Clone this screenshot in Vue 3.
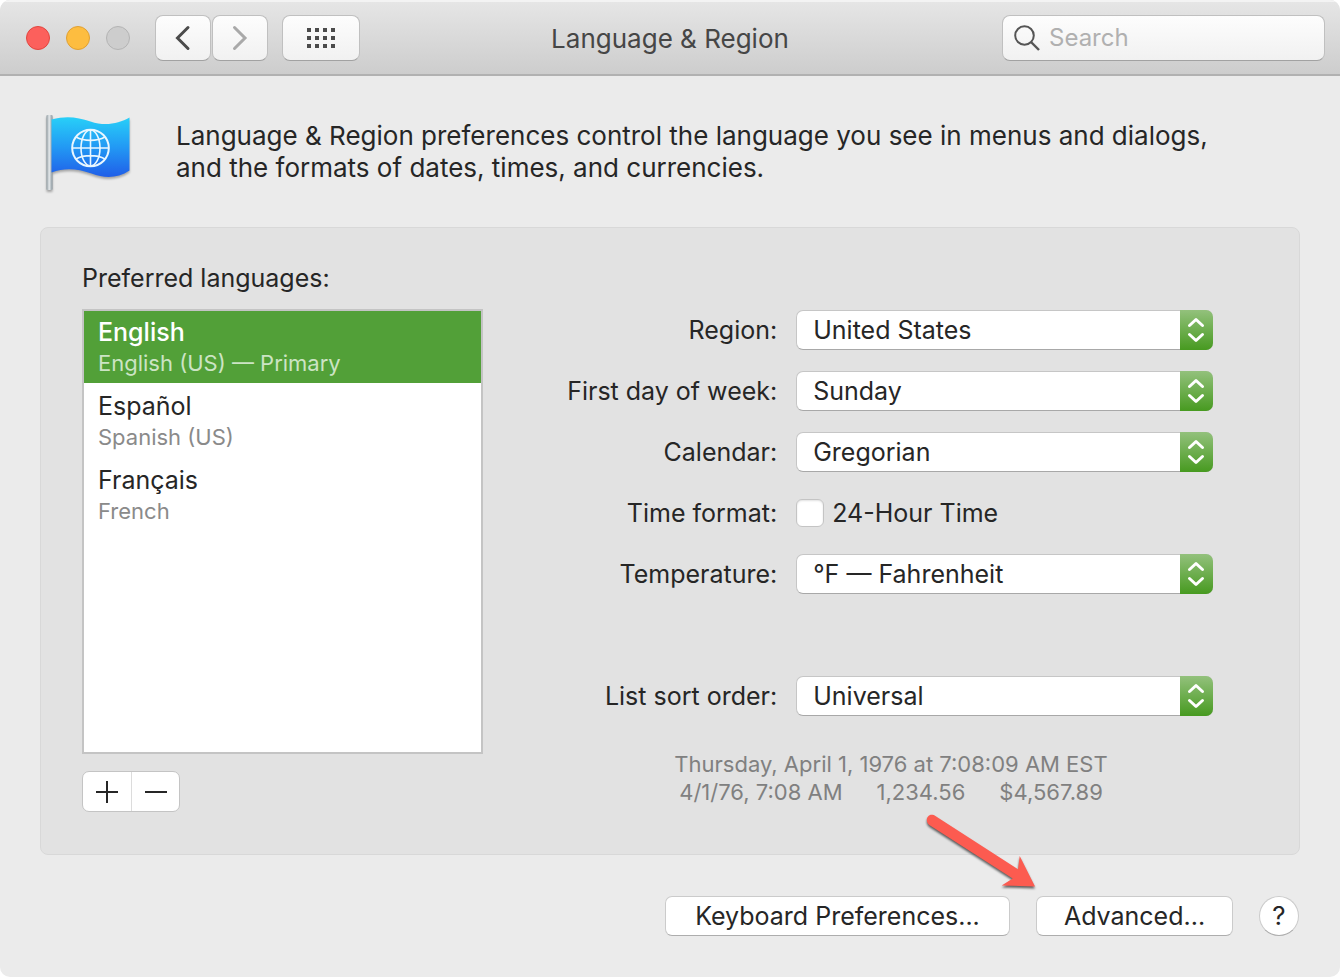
<script setup>
import { ref } from 'vue';

const languages = [
  { name: 'English', detail: 'English (US) — Primary' },
  { name: 'Español', detail: 'Spanish (US)' },
  { name: 'Français', detail: 'French' }
];
const selected = ref(0);
const search = ref('');

const region = ref('United States');
const firstDay = ref('Sunday');
const calendar = ref('Gregorian');
const use24Hour = ref(false);
const temperature = ref('°F — Fahrenheit');
const sortOrder = ref('Universal');
</script>

<template>
  <div class="window">
    <header class="titlebar">
      <div class="toolbar">
        <div class="lights">
          <button type="button" class="light close" aria-label="Close"></button>
          <button type="button" class="light minimize" aria-label="Minimize"></button>
          <button type="button" class="light zoom" aria-label="Zoom" disabled></button>
        </div>
        <div class="nav">
          <button type="button" class="tool" aria-label="Back">
            <svg width="16" height="26" viewBox="0 0 16 26"><path d="M13 2.500 2.500 13 13 23.500" fill="none" stroke="#4b4b4b" stroke-width="3" stroke-linecap="round" /></svg>
          </button>
          <button type="button" class="tool" aria-label="Forward">
            <svg width="16" height="26" viewBox="0 0 16 26"><path d="M2.500 2.500 13 13 2.500 23.500" fill="none" stroke="#a9a9a9" stroke-width="3" stroke-linecap="round" /></svg>
          </button>
        </div>
        <button type="button" class="tool all" aria-label="Show All">
          <svg width="28" height="20" viewBox="0 0 28 20" fill="#4b4b4b">
            <template v-for="row in 3" :key="row">
              <rect v-for="col in 4" :key="col" :x="(col - 1) * 8" :y="(row - 1) * 8" width="4" height="4" />
            </template>
          </svg>
        </button>
      </div>
      <h1>Language &amp; Region</h1>
      <label class="search">
        <svg width="26" height="26" viewBox="0 0 26 26" fill="none" stroke="#555" stroke-width="2"><circle cx="10.500" cy="10.500" r="9.300" /><path d="m17 17 8 8" stroke-width="2.400" /></svg>
        <input v-model="search" type="text" placeholder="Search" aria-label="Search" />
      </label>
    </header>

    <section class="intro">
      <svg class="flag" width="90" height="82" viewBox="0 0 90 82" aria-hidden="true">
        <defs>
          <linearGradient id="cloth" x1="0" y1="0" x2="0" y2="1">
            <stop offset="0" stop-color="#28cff8" />
            <stop offset="0.500" stop-color="#2299f4" />
            <stop offset="1" stop-color="#205ee8" />
          </linearGradient>
          <linearGradient id="pole" x1="0" y1="0" x2="1" y2="0">
            <stop offset="0" stop-color="#8d999f" />
            <stop offset="0.450" stop-color="#e6eaec" />
            <stop offset="1" stop-color="#87949c" />
          </linearGradient>
        </defs>
        <rect x="1.500" y="4" width="6" height="75" rx="1" fill="url(#pole)" />
        <path d="M6.500 8.500c16-4 26-2 39 2 15 5 28 2 39-4v53c-12 8-25 8-38 3-15-5-26-6-40-1z" fill="url(#cloth)" />
        <g fill="none" stroke="#e9f7ff" stroke-width="1.600">
          <circle cx="45.500" cy="37" r="18.300" stroke-width="2" />
          <ellipse cx="45.500" cy="37" rx="9.500" ry="18" />
          <path d="M45.500 19v36M27.500 37h36M31 26c8 4.500 21 4.500 29 0M31 48c8-4.500 21-4.500 29 0" />
        </g>
      </svg>
      <p>Language &amp; Region preferences control the language you see in menus and dialogs,<br />and the formats of dates, times, and currencies.</p>
    </section>

    <main class="panel">
      <section class="languages">
        <h2>Preferred languages:</h2>
        <ul class="list">
          <li v-for="(lang, i) in languages" :key="lang.name">
            <button type="button" class="language" :class="{ active: selected === i }" @click="selected = i">
              <span class="name">{{ lang.name }}</span>
              <span class="detail">{{ lang.detail }}</span>
            </button>
          </li>
        </ul>
        <div class="edit">
          <button type="button" aria-label="Add language">
            <svg width="24" height="24" viewBox="0 0 24 24"><path d="M12 1v22M1 12h22" stroke="#262626" stroke-width="2" /></svg>
          </button>
          <button type="button" aria-label="Remove language">
            <svg width="24" height="24" viewBox="0 0 24 24"><path d="M1 12h22" stroke="#262626" stroke-width="2" /></svg>
          </button>
        </div>
      </section>

      <section class="formats">
        <form class="fields" @submit.prevent>
          <label for="region">Region:</label>
          <div class="popup">
            <select id="region" v-model="region"><option>United States</option></select>
            <span class="stepper"><svg width="18" height="26" viewBox="0 0 18 26"><path d="m2.500 8.500 6.500-6 6.500 6M2.500 17.500l6.500 6 6.500-6" /></svg></span>
          </div>

          <label for="first-day">First day of week:</label>
          <div class="popup">
            <select id="first-day" v-model="firstDay"><option>Sunday</option><option>Monday</option></select>
            <span class="stepper"><svg width="18" height="26" viewBox="0 0 18 26"><path d="m2.500 8.500 6.500-6 6.500 6M2.500 17.500l6.500 6 6.500-6" /></svg></span>
          </div>

          <label for="calendar">Calendar:</label>
          <div class="popup">
            <select id="calendar" v-model="calendar"><option>Gregorian</option></select>
            <span class="stepper"><svg width="18" height="26" viewBox="0 0 18 26"><path d="m2.500 8.500 6.500-6 6.500 6M2.500 17.500l6.500 6 6.500-6" /></svg></span>
          </div>

          <span class="caption">Time format:</span>
          <label class="check">
            <input v-model="use24Hour" type="checkbox" />
            24-Hour Time
          </label>

          <label for="temperature">Temperature:</label>
          <div class="popup">
            <select id="temperature" v-model="temperature"><option>°F — Fahrenheit</option><option>°C — Celsius</option></select>
            <span class="stepper"><svg width="18" height="26" viewBox="0 0 18 26"><path d="m2.500 8.500 6.500-6 6.500 6M2.500 17.500l6.500 6 6.500-6" /></svg></span>
          </div>

          <div class="spacer"></div>

          <label for="sort-order">List sort order:</label>
          <div class="popup">
            <select id="sort-order" v-model="sortOrder"><option>Universal</option></select>
            <span class="stepper"><svg width="18" height="26" viewBox="0 0 18 26"><path d="m2.500 8.500 6.500-6 6.500 6M2.500 17.500l6.500 6 6.500-6" /></svg></span>
          </div>
        </form>

        <div class="sample">
          <p>Thursday, April 1, 1976 at 7:08:09 AM EST</p>
          <p class="numbers"><span>4/1/76, 7:08 AM</span><span>1,234.56</span><span>$4,567.89</span></p>
        </div>
      </section>
    </main>

    <footer class="actions">
      <button type="button" class="push keyboard">Keyboard Preferences...</button>
      <div class="advanced">
        <button type="button" class="push">Advanced...</button>
        <svg class="arrow" width="120" height="84" viewBox="0 0 120 84" aria-hidden="true">
          <path d="M11 3.700 94 57.300 95.700 44 111 74.500 77.700 73.500 88.700 66.500 5.300 13C1 10 2.500 2 8.500 2.800c1 .1 1.800.400 2.500.900z" fill="#fc5b50" />
        </svg>
      </div>
      <button type="button" class="help" aria-label="Help">?</button>
    </footer>
  </div>
</template>

<style>
body {
  background: #fff;
}
</style>

<style scoped>
.window {
  display: flex;
  flex-direction: column;
  min-height: 100vh;
  box-sizing: border-box;
  overflow: hidden;
  border-radius: 10px;
  background: #ebebeb;
  color: #262626;
  font-family: Inter, "Liberation Sans", sans-serif;
  font-size: 25px;
  line-height: 32px;
}

h1,
h2,
p,
ul {
  margin: 0;
  padding: 0;
  font-size: inherit;
  font-weight: 400;
}

button,
input,
select {
  margin: 0;
  padding: 0;
  border: 0;
  font: inherit;
  color: inherit;
}

/* Title bar */
.titlebar {
  display: grid;
  grid-template-columns: 1fr auto 1fr;
  align-items: center;
  box-sizing: border-box;
  height: 76px;
  padding: 2px 15px 0 26px;
  border-bottom: 2px solid #b1b1b1;
  background: linear-gradient(#e6e6e6, #cdcdcd);
  box-shadow: inset 0 2px 0 #f3f3f3;
}

.titlebar h1 {
  padding-right: 11px;
  padding-top: 2px;
  color: #464646;
  font-size: 26px;
}

.toolbar {
  display: flex;
  align-items: center;
}

.lights {
  display: flex;
  gap: 16px;
  margin-right: 25px;
}

.light {
  width: 24px;
  height: 24px;
  border: 1px solid #b4b4b4;
  border-radius: 50%;
  background: #cdcdcd;
}

.light.close {
  border-color: #e2463f;
  background: #fc605c;
}

.light.minimize {
  border-color: #e0a033;
  background: #fdbd40;
}

.nav {
  display: flex;
  gap: 1px;
  margin-right: 14px;
}

.tool,
.search {
  display: flex;
  align-items: center;
  box-sizing: border-box;
  height: 46px;
  border: 1px solid #c0c0c0;
  border-bottom-color: #a2a2a2;
  border-radius: 8px;
  background: linear-gradient(#fdfdfd, #f1f1f1);
}

.tool {
  justify-content: center;
  width: 56px;
}

.tool.all {
  width: 78px;
}

.search {
  justify-self: end;
  width: 100%;
  max-width: 323px;
  gap: 9px;
  padding: 0 11px;
}

.search svg {
  flex: none;
}

.search input {
  width: 100%;
  min-width: 0;
  background: transparent;
  font-size: 24px;
  outline: none;
}

.search input::placeholder {
  color: #b0b0b0;
  opacity: 1;
}

/* Heading with the flag */
.intro {
  display: flex;
  align-items: center;
  gap: 41px;
  height: 151px;
  padding: 0 45px;
  font-size: 26px;
}

.flag {
  flex: none;
  filter: drop-shadow(0 2px 1px rgba(0, 0, 0, 0.3));
}

/* Panel */
.panel {
  display: grid;
  grid-template-columns: 401px 1fr;
  margin: 0 40px;
  padding: 34px 0 42px 41px;
  border: 1px solid #d8d8d8;
  border-radius: 8px;
  background: #e2e2e2;
}

.list {
  display: flex;
  flex-direction: column;
  gap: 2px;
  box-sizing: border-box;
  height: 445px;
  margin-top: 15px;
  border: 2px solid #c4c4c4;
  background: #fff;
  list-style: none;
}

.language {
  display: flex;
  flex-direction: column;
  box-sizing: border-box;
  width: 100%;
  height: 72px;
  padding: 5px 14px;
  background: transparent;
  text-align: left;
}

.language.active {
  background: #52a038;
  color: #fff;
}

.name {
  line-height: 32px;
}

.active .name {
  font-weight: 500;
}

.detail {
  color: #8a8a8a;
  font-size: 22px;
  line-height: 30px;
}

.active .detail {
  color: #cce4c4;
}

.edit {
  display: inline-flex;
  margin-top: 17px;
  border: 1px solid #c4c4c4;
  border-radius: 7px;
  background: #fff;
}

.edit button {
  display: flex;
  align-items: center;
  justify-content: center;
  width: 48px;
  height: 39px;
  background: transparent;
}

.edit button + button {
  border-left: 1px solid #dcdcdc;
}

.formats {
  padding-top: 48px;
}

.fields {
  display: grid;
  grid-template-columns: 12fr 17fr;
  grid-auto-rows: 40px;
  align-items: center;
  gap: 21px 19px;
  margin-right: 86px;
}

.fields > label:not(.check),
.caption {
  text-align: right;
  white-space: nowrap;
}

.spacer {
  grid-column: 1 / -1;
}

.popup {
  position: relative;
}

.popup select {
  display: block;
  appearance: none;
  box-sizing: border-box;
  width: 100%;
  height: 40px;
  padding: 0 40px 0 16px;
  border: 1px solid #c6c6c6;
  border-bottom-color: #a8a8a8;
  border-radius: 7px;
  background: #fff;
}

.stepper {
  position: absolute;
  top: 0;
  right: 0;
  display: flex;
  align-items: center;
  justify-content: center;
  width: 33px;
  height: 40px;
  border-radius: 0 7px 7px 0;
  background: linear-gradient(#93c17c, #479a20);
  pointer-events: none;
}

.stepper path {
  fill: none;
  stroke: #fff;
  stroke-width: 3;
  stroke-linecap: round;
  stroke-linejoin: round;
}

.check {
  display: flex;
  align-items: center;
  gap: 8px;
}

.check input {
  appearance: none;
  box-sizing: border-box;
  width: 28px;
  height: 28px;
  border: 1px solid #c4c4c4;
  border-radius: 6px;
  background: #fff;
  box-shadow: inset 0 1px 2px rgba(0, 0, 0, 0.12);
}

.check input:checked {
  background: #52a038;
}

.sample {
  margin-top: 34px;
  padding-bottom: 1px;
  color: #808080;
  font-size: 22px;
  line-height: 28px;
  text-align: center;
}

.numbers {
  display: flex;
  justify-content: center;
  gap: 34px;
}

/* Bottom buttons */
.actions {
  display: flex;
  justify-content: flex-end;
  gap: 26px;
  margin-top: 41px;
  padding: 0 41px 40px;
}

.push,
.help {
  box-sizing: border-box;
  height: 40px;
  border: 1px solid #cbcbcb;
  border-bottom-color: #adadad;
  border-radius: 7px;
  background: #fff;
}

.push {
  width: 197px;
}

.push.keyboard {
  width: 345px;
}

.help {
  width: 40px;
  border-radius: 50%;
  font-size: 26px;
}

.advanced {
  position: relative;
}

/* Arrow that points at the Advanced button */
.arrow {
  position: absolute;
  top: -84px;
  left: -112px;
  filter: drop-shadow(0 2px 1px rgba(0, 0, 0, 0.6));
  pointer-events: none;
}
</style>
